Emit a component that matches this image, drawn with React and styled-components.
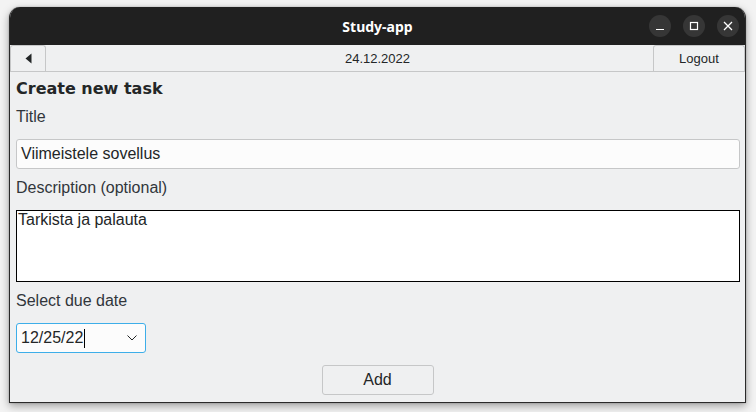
import React from 'react';
import styled, { createGlobalStyle } from 'styled-components';

const GlobalStyle = createGlobalStyle`
  html, body {
    margin: 0;
    padding: 0;
    background: #f3f3f3;
  }
`;

const Page = styled.div`
  width: 756px;
  height: 412px;
  padding: 7px 0 0 9px;
  box-sizing: border-box;
`;

const Window = styled.div`
  width: 737px;
  height: 396px;
  display: flex;
  flex-direction: column;
  background: #eff0f1;
  border-radius: 11px 11px 0 0;
  box-shadow: 0 3px 9px rgba(0, 0, 0, 0.35), 0 0 2px rgba(0, 0, 0, 0.25);
  overflow: hidden;
  box-sizing: border-box;
  border: 1px solid #2a2a2a;
  border-top: none;
`;

const TitleBar = styled.div`
  height: 38px;
  flex: none;
  background: #202020;
  display: flex;
  align-items: center;
  justify-content: center;
  position: relative;
  font-family: 'Noto Sans', sans-serif;
  font-weight: 700;
  font-size: 14px;
  color: #ffffff;
`;

const WindowControls = styled.div`
  position: absolute;
  right: 6px;
  top: 8px;
  display: flex;
  gap: 12px;
`;

const ControlButton = styled.div`
  width: 22px;
  height: 22px;
  border-radius: 50%;
  background: #363636;
  display: flex;
  align-items: center;
  justify-content: center;
`;

const Toolbar = styled.div`
  height: 27px;
  flex: none;
  display: flex;
  border-bottom: 1px solid #c6c7c8;
  box-sizing: border-box;
  font-family: 'Liberation Sans', Arial, sans-serif;
  font-size: 13px;
  color: #232627;
`;

const ToolButton = styled.div`
  width: ${(p) => p.$width}px;
  flex: none;
  display: flex;
  align-items: center;
  justify-content: center;
  border: 1px solid #c6c7c8;
  border-bottom: none;
  border-radius: 3px 3px 0 0;
  box-sizing: border-box;
  background: #eff0f1;
`;

const DateLabel = styled.div`
  flex: 1;
  display: flex;
  align-items: center;
  justify-content: center;
  padding-left: 56px;
`;

const Content = styled.div`
  flex: 1;
  display: flex;
  flex-direction: column;
  padding: 7px 5px 0 6px;
  font-family: 'Liberation Sans', Arial, sans-serif;
  font-size: 16px;
  color: #31363b;
`;

const Heading = styled.div`
  font-family: 'DejaVu Sans', sans-serif;
  font-weight: 700;
  font-size: 16px;
  line-height: 20px;
  height: 19px;
  color: #232627;
`;

const Label = styled.div`
  height: 41px;
  padding-top: 10px;
  line-height: 18px;
  box-sizing: border-box;
`;

const TextField = styled.div`
  height: 30px;
  box-sizing: border-box;
  border: 1px solid ${(p) => (p.$focused ? '#3daee9' : '#c6c7c8')};
  border-radius: 3px;
  background: #fcfcfc;
  display: flex;
  align-items: center;
  padding: 0 8px 0 4px;
  color: #232627;
  width: ${(p) => (p.$width ? `${p.$width}px` : 'auto')};
`;

const TextArea = styled.div`
  height: 72px;
  box-sizing: border-box;
  border: 1px solid #000;
  background: #ffffff;
  padding: 0 0 0 1px;
  line-height: 18px;
  color: #232627;
`;

const Caret = styled.span`
  display: inline-block;
  width: 1px;
  height: 19px;
  background: #000;
  margin-left: 1px;
`;

const Spacer = styled.div`
  flex: 1;
`;

const ButtonRow = styled.div`
  display: flex;
  justify-content: center;
  padding-top: 12px;
  padding-right: 1px;
`;

const Button = styled.div`
  width: 112px;
  height: 30px;
  box-sizing: border-box;
  border: 1px solid #c6c7c8;
  border-radius: 3px;
  background: #eff0f1;
  display: flex;
  align-items: center;
  justify-content: center;
  color: #232627;
`;

const App = () => (
  <>
    <GlobalStyle />
    <Page>
      <Window>
        <TitleBar>
          Study-app
          <WindowControls>
            <ControlButton>
              <svg width="10" height="10" viewBox="0 0 10 10">
                <line x1="1" y1="8.5" x2="9" y2="8.5" stroke="#fff" strokeWidth="1.2" />
              </svg>
            </ControlButton>
            <ControlButton>
              <svg width="10" height="10" viewBox="0 0 10 10">
                <rect x="1.5" y="1.5" width="7" height="7" fill="none" stroke="#fff" strokeWidth="1.2" />
              </svg>
            </ControlButton>
            <ControlButton>
              <svg width="10" height="10" viewBox="0 0 10 10">
                <path d="M1 1 L9 9 M9 1 L1 9" stroke="#fff" strokeWidth="1.3" />
              </svg>
            </ControlButton>
          </WindowControls>
        </TitleBar>
        <Toolbar>
          <ToolButton $width={36}>
            <svg width="7" height="11" viewBox="0 0 7 11">
              <path d="M6.5 0.5 L0.5 5.5 L6.5 10.5 Z" fill="#232627" />
            </svg>
          </ToolButton>
          <DateLabel>24.12.2022</DateLabel>
          <ToolButton $width={92}>Logout</ToolButton>
        </Toolbar>
        <Content>
          <Heading>Create new task</Heading>
          <Label>Title</Label>
          <TextField>Viimeistele sovellus</TextField>
          <Label>Description (optional)</Label>
          <TextArea>Tarkista ja palauta</TextArea>
          <Label>Select due date</Label>
          <TextField $focused $width={130}>
            <span>12/25/22</span>
            <Caret />
            <Spacer />
            <svg width="10" height="6" viewBox="0 0 10 6">
              <path d="M0.5 0.5 L5 5 L9.5 0.5" fill="none" stroke="#232627" strokeWidth="1" />
            </svg>
          </TextField>
          <ButtonRow>
            <Button>Add</Button>
          </ButtonRow>
        </Content>
      </Window>
    </Page>
  </>
);

export default App;
